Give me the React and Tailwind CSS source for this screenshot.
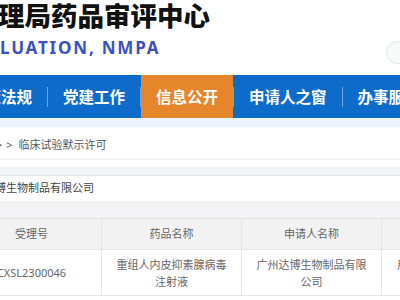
import React from "react";
import { Search } from "lucide-react";

const navItems = ["政策法规", "党建工作", "信息公开", "申请人之窗", "办事服务"];

const App = () => {
  return (
    <div className="w-[400px] h-[300px] overflow-hidden bg-white relative font-['Noto_Sans','Noto_Sans_CJK_SC',sans-serif]">
      {/* header */}
      <div className="h-[75px] relative">
        <div className="-ml-[2px] text-[26.5px] leading-[30px] font-black text-[#111] whitespace-nowrap font-['Noto_Sans_CJK_SC',sans-serif]">
          理局药品审评中心
        </div>
        <div className="mt-[8px] text-[17px] leading-[20px] font-bold tracking-[1.8px] text-[#3c50c5] whitespace-nowrap">
          LUATION, NMPA
        </div>
        <div className="absolute left-[386px] top-[41px] w-[80px] h-[23px] rounded-full border border-[#e3e5ea] bg-[#f8f9fb] flex items-center pl-[12px]">
          <Search size={12} className="text-[#666]" />
        </div>
      </div>

      {/* nav */}
      <div className="h-[43px] bg-[#0d6bc9] flex items-center -ml-[45px] w-max">
        {navItems.map((item, i) => (
          <React.Fragment key={item}>
            {i > 0 && <div className="w-px h-[20px] bg-white/40" />}
            <div
              className={
                "h-full flex items-center px-[15px] text-white font-bold text-[15.5px] whitespace-nowrap font-['Noto_Sans_CJK_SC',sans-serif] " +
                (item === "信息公开" ? "bg-[#e5852c]" : "")
              }
            >
              {item}
            </div>
          </React.Fragment>
        ))}
      </div>

      <div className="h-[9px] bg-[#eef4fd]" />

      {/* breadcrumb */}
      <div className="h-[31px] pt-[6px] flex items-center text-[11px] text-[#555] whitespace-nowrap">
        <span className="-ml-[4px]">&gt;</span>
        <span className="ml-[4px]">&gt;</span>
        <span className="ml-[6px]">临床试验默示许可</span>
      </div>

      <div className="h-[2px] bg-[#f4f4f6]" />
      <div className="h-[7px] bg-white" />
      <div className="h-[9px] bg-[#f3f4f8] border-b border-[#e4e5ea]" />
      <div className="h-[25px] flex items-center -ml-[38px] text-[11px] text-[#444] whitespace-nowrap">
        广州达博生物制品有限公司
      </div>
      <div className="h-[17px] bg-[#f3f3f6]" />

      {/* table */}
      <div className="-ml-[38px] w-[560px] text-[11px] text-[#666]">
        <div className="grid grid-cols-[140px_140px_140px_140px] h-[32px] bg-[#f2f2f2] border-y border-[#e5e5e5]">
          <div className="flex items-center justify-center border-r border-[#e5e5e5]">受理号</div>
          <div className="flex items-center justify-center border-r border-[#e5e5e5]">药品名称</div>
          <div className="flex items-center justify-center border-r border-[#e5e5e5]">申请人名称</div>
          <div className="flex items-center justify-center">承办日期</div>
        </div>
        <div className="grid grid-cols-[140px_140px_140px_140px] h-[46px] border-b border-[#e5e5e5] leading-[17px]">
          <div className="flex items-center justify-center border-r border-[#e5e5e5] px-[12px] text-center">CXSL2300046</div>
          <div className="flex items-center justify-center border-r border-[#e5e5e5] px-[12px] text-center">重组人内皮抑素腺病毒注射液</div>
          <div className="flex items-center justify-center border-r border-[#e5e5e5] px-[12px] text-center">广州达博生物制品有限公司</div>
          <div className="flex items-center justify-center px-[14px] text-center">用于晚期实体瘤患者的治疗</div>
        </div>
      </div>
    </div>
  );
};

export default App;
